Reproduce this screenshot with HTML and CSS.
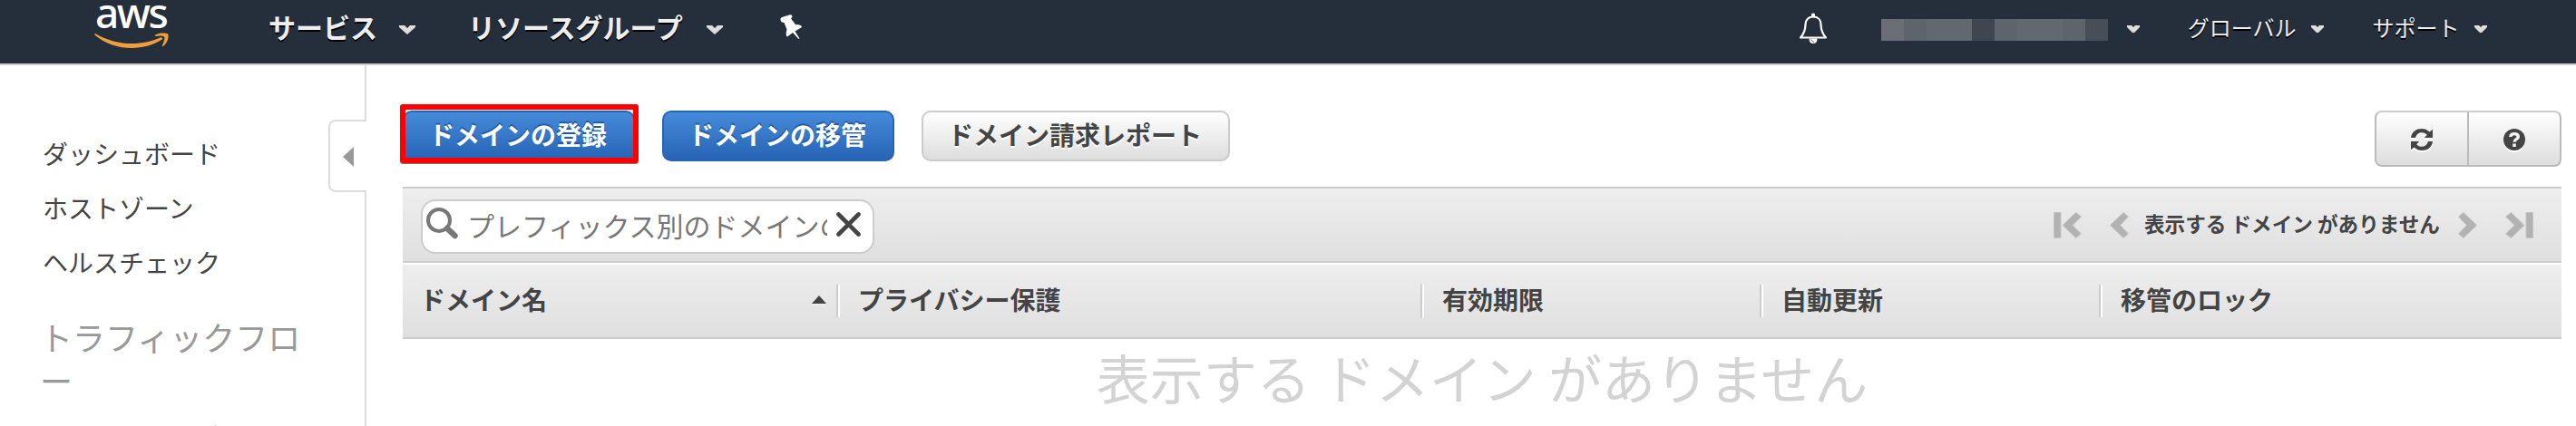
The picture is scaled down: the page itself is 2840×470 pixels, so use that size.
FILE: index.html
```html
<!DOCTYPE html>
<html lang="ja">
<head>
<meta charset="utf-8">
<title>Route 53</title>
<link rel="stylesheet" href="styles.css">
</head>
<body>
<header class="topbar">
  <div class="logo">
    <span class="logo-text">aws</span>
    <svg class="smile" viewBox="0 0 82 19" width="82" height="19"><path d="M1 1C25 15 52 15 74 5L75.500 7C55 21 22 21 .4 2.400Q0 1 1 1Z"/><path d="M67 2.500C71 0 78 0 81 1.200C83 5 80 12 76 15Q74.500 15.500 75 14C77 9 78 6 77 4.500Q75 3 68 4Q66 3.500 67 2.500Z"/></svg>
  </div>
  <div class="menu menu-services">サービス<svg class="caret" viewBox="0 0 18 10"><path d="M0 0H6L9 3L12 0H18V2L9 10L0 2Z"/></svg></div>
  <div class="menu menu-groups">リソースグループ<svg class="caret" viewBox="0 0 18 10"><path d="M0 0H6L9 3L12 0H18V2L9 10L0 2Z"/></svg></div>
  <svg class="pin" viewBox="0 0 24 27" width="24" height="27"><path d="M.5 6Q0 4 2 3L11 .3Q13.500 0 13.500 2.500L12 4.500L17 11Q24 11 24 14L16.500 18.500L21.500 26.500L20.500 27L14 20L8 24.500Q5.500 24 7.500 16.500L4.500 9Q1 9 .5 6Z"/></svg>
  <svg class="bell" viewBox="0 0 32 35" width="32" height="35"><path d="M2 27.500C6 23 7.500 19 7.500 13C7.500 7.500 11 4.500 16 4.500C21 4.500 24.500 7.500 24.500 13C24.500 19 26 23 30 27.500Z" fill="none" stroke="#fff" stroke-width="2.200" stroke-linejoin="round"/><path d="M14 4V1.500Q16-.5 18 1.500V4ZM11.500 28.500H20.500Q20.500 34 16 34Q11.500 34 11.500 28.500Z" fill="#fff"/><path d="M13 29.500L17 33" stroke="#242f3b" stroke-width=".7"/></svg>
  <div class="account">
    <div class="mosaic"><i class="a"></i><i class="b"></i><i class="c"></i><i class="c"></i><i class="d"></i><i class="b"></i><i class="c"></i><i class="c"></i><i class="b"></i><i class="e"></i></div>
    <svg class="caret-s" viewBox="0 0 14 8"><path d="M0 0H5L7 2L9 0H14V2L8 8H6L0 2Z"/></svg>
  </div>
  <div class="menu-s menu-region">グローバル<svg class="caret-s" viewBox="0 0 14 8"><path d="M0 0H5L7 2L9 0H14V2L8 8H6L0 2Z"/></svg></div>
  <div class="menu-s menu-support">サポート<svg class="caret-s" viewBox="0 0 14 8"><path d="M0 0H5L7 2L9 0H14V2L8 8H6L0 2Z"/></svg></div>
</header>
<div class="layout">
  <nav class="sidebar">
    <a class="item">ダッシュボード</a>
    <a class="item">ホストゾーン</a>
    <a class="item">ヘルスチェック</a>
    <h2 class="group">トラフィックフロ<br>ー</h2>
    <a class="item">トラフィックポリシー</a>
    <div class="handle"><svg viewBox="0 0 12 22" width="12" height="22"><path d="M12 0V22L0 11Z" fill="#999"/></svg></div>
  </nav>
  <main class="main">
    <div class="actions">
      <div class="btn primary marked">ドメインの登録</div>
      <div class="btn primary">ドメインの移管</div>
      <div class="btn">ドメイン請求レポート</div>
      <div class="tools">
        <div class="tool"><svg viewBox="0 0 24 24" width="24" height="24"><path d="M0 10C1 3 6 0 12 0C15 0 18 1 20.500 3.500L24 .8V10H14.800L17.800 6.800C16 5 14.500 4.200 12 4.200C8.500 4.200 6 6.200 5 10ZM24 14C23 21 18 24 12 24C9 24 6 23 3.500 20.500L0 23.200V14H9.200L6.200 17.200C8 19 9.500 19.800 12 19.800C15.500 19.800 18 17.800 19 14Z"/></svg></div>
        <div class="tool"><svg viewBox="0 0 24 24" width="24" height="24"><circle cx="12" cy="12" r="12"/><path d="M7.800 9C7.800 6.500 9.500 5.600 12 5.600C14.600 5.600 16.300 7 16.300 9C16.300 11.800 12 11.500 12 14.700" fill="none" stroke="#f4f4f4" stroke-width="3.400"/><path d="M10.200 16.500H13.800V20H10.200Z" fill="#f4f4f4"/></svg></div>
      </div>
    </div>
    <div class="toolbar">
      <div class="search">
        <svg class="lens" viewBox="0 0 35 35" width="35" height="35"><circle cx="14" cy="14" r="12" fill="none" stroke="#777" stroke-width="4"/><path d="M23 23L31.500 31" stroke="#777" stroke-width="6.500" stroke-linecap="round"/></svg>
        <span class="placeholder">プレフィックス別のドメインの検索</span>
        <svg class="clear" viewBox="0 0 27 27" width="27" height="27"><path d="M2.500 2.500L24.500 24.500M24.500 2.500L2.500 24.500" stroke="#444" stroke-width="4.600" stroke-linecap="round"/></svg>
      </div>
      <div class="pager">
        <svg viewBox="0 0 31 29" width="31" height="29"><path d="M.5.500H8V28.500H.5ZM10 14.500L24.500.5L30.500 5L21 14.500L30.500 24L24.500 28.500Z"/></svg>
        <svg class="prev" viewBox="0 0 21 29" width="21" height="29"><path d="M.5 14.500L15 .5L20.500 5L11.500 14.500L20.500 24L15 28.500Z"/></svg>
        <span class="pager-text">表示する ドメイン がありません</span>
        <svg class="next" viewBox="0 0 21 29" width="21" height="29"><path d="M20.500 14.500L6 .5L.5 5L9.500 14.500L.5 24L6 28.500Z"/></svg>
        <svg viewBox="0 0 31 29" width="31" height="29"><path d="M30.500.500H23V28.500H30.500ZM21 14.500L6.500.5L.5 5L10 14.500L.5 24L6.500 28.500Z"/></svg>
      </div>
    </div>
    <div class="columns">
      <div class="col">ドメイン名<svg class="sort" viewBox="0 0 16 9" width="16" height="9"><path d="M8 0L16 9H0Z" fill="#444"/></svg></div>
      <div class="col">プライバシー保護</div>
      <div class="col">有効期限</div>
      <div class="col">自動更新</div>
      <div class="col">移管のロック</div>
    </div>
    <div class="empty">表示する ドメイン がありません</div>
  </main>
</div>
</body>
</html>
```
FILE: styles.css
```css
* { box-sizing: border-box; }
html { height: 470px; overflow: hidden; }
body {
  margin: 0;
  width: 2840px;
  height: 470px;
  overflow: hidden;
  background: #fff;
  color: #444;
  font-family: "Noto Sans CJK JP", sans-serif;
  font-size: 28px;
  white-space: nowrap;
}
svg { display: block; flex: none; }

.topbar {
  display: flex;
  align-items: flex-start;
  height: 72px;
  background: #242f3b;
  border-bottom: 2px solid #ccc;
  color: #eee;
}
.logo { width: 82px; margin-left: 104px; }
.logo-text {
  display: block;
  height: 36px;
  padding-left: 1px;
  color: #fff;
  font: 500 46px/26px "Noto Sans", sans-serif;
  letter-spacing: -2.5px;
}
.smile { fill: #f09d3c; }
.menu, .menu-s {
  display: flex;
  text-shadow: 0 2px 0 #000;
}
.menu { font-size: 30px; font-weight: 700; line-height: 59px; }
.menu-s { font-size: 24px; line-height: 59px; }
.menu-services { margin-left: 110px; }
.menu-groups { margin-left: 58px; }
.caret { width: 18px; height: 10px; margin: 28px 0 0 24px; fill: #ddd; }
.menu-groups .caret { margin-left: 26px; }
.caret-s { width: 14px; height: 8px; margin: 28px 0 0 17px; fill: #ddd; }
.pin { margin: 16px 0 0 63px; fill: #fff; }
.bell { margin: 14px 0 0 1099px; }
.account { display: flex; margin-left: 59px; }
.mosaic { display: flex; height: 24px; margin: 21px 4px 0 0; }
.mosaic i { width: 25px; }
.mosaic .a { background: #6b6e76; }
.mosaic .b { background: #5d646c; }
.mosaic .c { background: #62686f; }
.mosaic .d { background: #3f4551; }
.mosaic .e { background: #484e58; }
.menu-region { margin-left: 53px; }
.menu-support { margin-left: 53px; }

.layout { display: flex; height: 398px; overflow: hidden; }
.sidebar {
  position: relative;
  width: 404px;
  height: 398px;
  padding: 67px 0 0 47px;
  border-right: 2px solid #ddd;
  overflow: clip;
}
.item { display: block; height: 60px; line-height: 60px; }
.group {
  margin: 28px 0 9px -3px;
  color: #999;
  font-size: 36px;
  font-weight: 400;
  line-height: 48px;
}
.handle {
  position: absolute;
  top: 60px;
  right: -2px;
  width: 42px;
  height: 80px;
  padding: 28px 0 0 14px;
  background: #fff;
  border: 2px solid #ddd;
  border-right: 0;
  border-radius: 8px 0 0 8px;
}
.sidebar { overflow: visible; }

.main { width: 2380px; margin-left: 40px; }
.actions { display: flex; gap: 30px; height: 134px; padding-top: 50px; }
.btn {
  position: relative;
  height: 56px;
  padding: 0 29px 0 27px;
  border: 2px solid #ccc;
  border-radius: 10px;
  background: linear-gradient(#fff, #ddd);
  font-weight: 700;
  line-height: 48px;
  text-shadow: 0 2px 0 #fff;
}
.primary {
  border-color: #2764b3;
  background: linear-gradient(#468ada, #2764b5);
  color: #fff;
  text-shadow: 0 -2px 0 #235ba4;
}
.marked::after {
  content: "";
  position: absolute;
  inset: -9px -6px -4px -5px;
  border: 6px solid #f00;
  border-radius: 3px;
  box-shadow: 0 1px 0 #777;
}
.tools {
  display: flex;
  width: 206px;
  height: 62px;
  margin-left: auto;
  border: 2px solid #bbb;
  border-top-color: #ccc;
  border-radius: 8px;
  background: linear-gradient(#fff, #ddd);
}
.tool {
  display: flex;
  flex: 1;
  justify-content: center;
  padding-top: 18px;
  fill: #444;
}
.tool svg { filter: drop-shadow(0 2px 0 #fff); }
.tool + .tool { border-left: 2px solid #bbb; }

.toolbar {
  display: flex;
  justify-content: space-between;
  height: 84px;
  padding: 12px 31px 0 20px;
  border: solid #ccc;
  border-width: 2px 0;
  background: linear-gradient(#eee, #dfdfdf);
}
.search {
  display: flex;
  width: 500px;
  height: 60px;
  padding-left: 4px;
  border: 2px solid #ccc;
  border-radius: 16px;
  background: #fff;
}
.lens { margin-top: 7px; }
.placeholder {
  width: 397px;
  margin-left: 10px;
  overflow: hidden;
  color: #777;
  font-size: 30px;
  line-height: 53px;
}
.clear { margin: 12px 0 0 10px; }
.pager { display: flex; fill: #b2b2b2; }
.pager > svg { margin-top: 14px; stroke: #c4c4c4; stroke-width: 1; }
.pager .prev { margin-left: 31px; }
.pager .next { margin-right: 31px; }
.pager-text {
  width: 327px;
  margin: 0 19px 0 17px;
  font-size: 22.6px;
  font-weight: 700;
  line-height: 53px;
}

.columns {
  display: grid;
  grid-template-columns: 478px 644px 374px 374px 1fr;
  height: 82px;
  margin-top: 2px;
  padding-top: 22px;
  border-bottom: 2px solid #ccc;
  background: linear-gradient(#eee, #dfdfdf);
}
.col {
  display: flex;
  height: 36px;
  padding-left: 19px;
  border-left: 2px solid #ccc;
  box-shadow: inset 2px 0 0 #fff;
  font-weight: 700;
  line-height: 32px;
}
.col + .col { padding-left: 22px; }
.col:first-child { border: 0; box-shadow: none; }
.sort { margin: 12px 11px 0 auto; filter: drop-shadow(0 2px 0 #eee); }
.empty {
  color: #d3d3d3;
  font-size: 59px;
  font-weight: 400;
  line-height: 83px;
  text-align: center;
}
```
